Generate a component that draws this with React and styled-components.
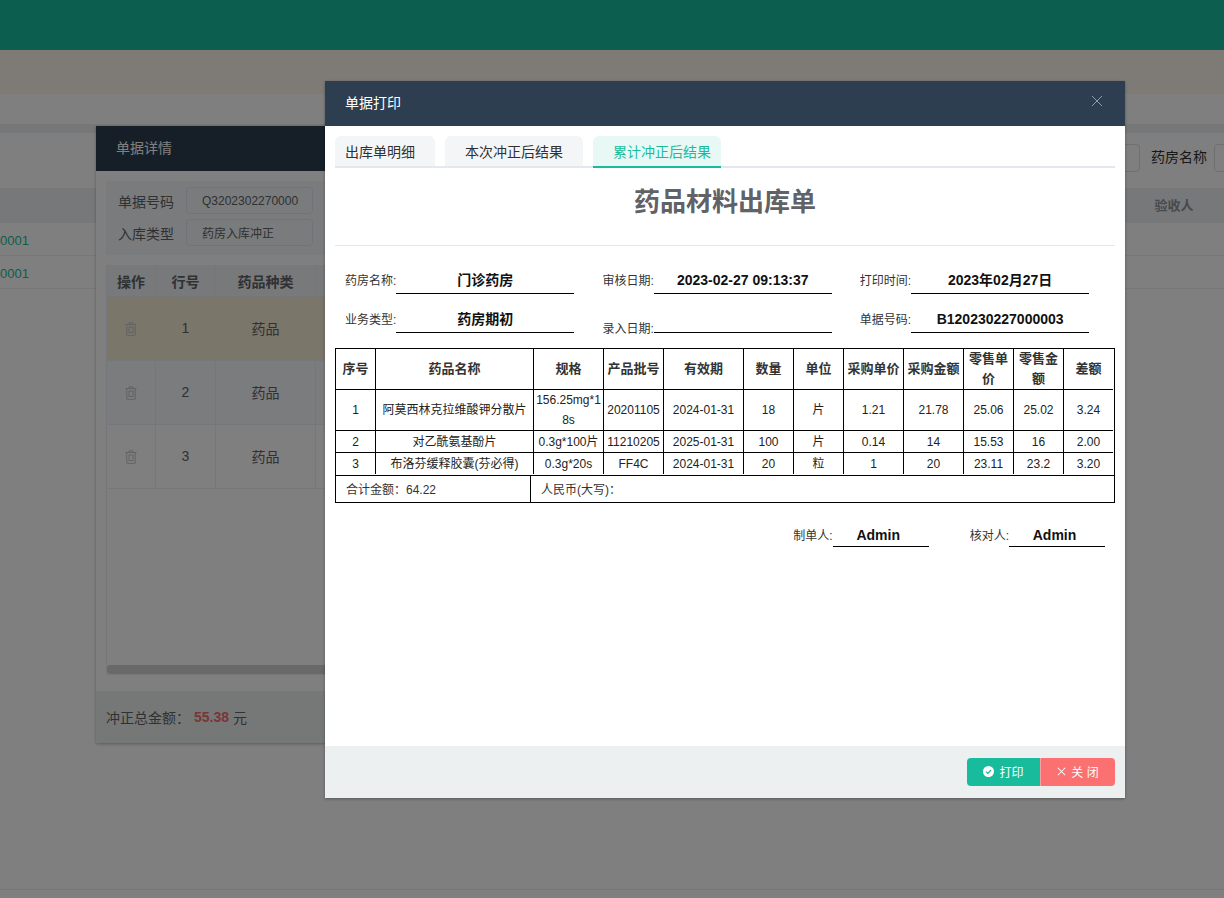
import styled, { createGlobalStyle } from "styled-components";

const FONT = `"Liberation Sans", "Noto Sans CJK SC", sans-serif`;

const GlobalStyle = createGlobalStyle`
    * {
        box-sizing: border-box;
    }
    html, body {
        margin: 0;
        padding: 0;
        height: 100%;
        overflow: hidden;
        background: #fff;
        font-family: ${FONT};
    }
`;

/* page behind the dialogs */
const Page = styled.div`
    width: 1224px;
    height: 898px;
    overflow: hidden;
    display: flex;
    flex-direction: column;
    background: #fff;
`;

const TopBar = styled.div`
    height: 50px;
    flex: none;
    background: #18bc9c;
`;

const NoticeBand = styled.div`
    height: 44px;
    flex: none;
    background: linear-gradient(#fdf5ec, #fdf6ea);
`;

const TabStrip = styled.div`
    height: 30px;
    flex: none;
    background: #fff;
`;

const GapStrip = styled.div`
    height: 9px;
    flex: none;
    background: #eceef0;
`;

const FilterRow = styled.div`
    height: 55px;
    flex: none;
    display: flex;
    align-items: center;
    justify-content: flex-end;
    margin-right: -90px;
    padding-bottom: 6px;
    font-size: 14px;
    color: #303133;
`;

const FilterLabel = styled.span`
    margin: 0 7px 0 11px;
    padding-bottom: 3px;
`;

const FilterInput = styled.div`
    width: 100px;
    height: 28px;
    border: 1px solid #dcdfe6;
    border-radius: 4px;
    background: #fff;
`;

const ListRow = styled.div`
    height: ${(p) => (p.$head ? 35 : 33)}px;
    flex: none;
    display: flex;
    align-items: center;
    justify-content: space-between;
    padding-top: ${(p) => (p.$head ? 0 : 3)}px;
    font-size: 14px;
    font-weight: ${(p) => (p.$head ? 700 : 400)};
    color: ${(p) => (p.$head ? "#909399" : "#18bc9c")};
    background: ${(p) => (p.$head ? "#eef0f2" : "#fff")};
    border-bottom: ${(p) => (p.$head ? "none" : "1px solid #ebeef5")};
`;

const ListCode = styled.span`
    width: 29px;
    text-align: right;
    font-size: 13px;
`;

const ListHeadCell = styled.span`
    width: 100px;
    padding-bottom: 2px;
    text-align: center;
    font-size: 13px;
`;

const PageFoot = styled.div`
    margin-top: auto;
    height: 9px;
    flex: none;
    border-top: 1px solid #ebeef5;
`;

/* details dialog, under the mask */
const DetailDialog = styled.div`
    position: absolute;
    left: 96px;
    top: 126px;
    width: 1000px;
    height: 617px;
    display: flex;
    flex-direction: column;
    background: #fff;
    box-shadow: 0 1px 3px rgba(0, 0, 0, 0.3);
`;

const DetailHeader = styled.div`
    height: 45px;
    flex: none;
    display: flex;
    align-items: center;
    padding: 0 0 4px 20px;
    background: #2c3e50;
    color: #fff;
    font-size: 14px;
`;

const DetailBody = styled.div`
    flex: 1;
    display: flex;
    flex-direction: column;
    gap: 10px;
    padding: 10px 10px 16px;
    min-height: 0;
`;

const DetailForm = styled.div`
    height: 74px;
    flex: none;
    display: grid;
    grid-template-columns: 68px 127px;
    grid-auto-rows: 27px;
    row-gap: 5px;
    padding: 6px 0 0 12px;
    align-items: center;
    background: #f5f7fa;
    font-size: 14px;
    color: #606266;
`;

const DetailInput = styled.div`
    height: 27px;
    display: flex;
    align-items: center;
    padding-left: 15px;
    font-size: 12px;
    color: #606266;
    border: 1px solid #e4e7ed;
    border-radius: 4px;
    background: #f5f7fa;
    overflow: hidden;
    white-space: nowrap;
`;

const DetailTable = styled.div`
    flex: 1;
    display: flex;
    flex-direction: column;
    min-height: 0;
    border: 1px solid #ebeef5;
    border-top: none;
`;

const DetailRow = styled.div`
    flex: none;
    display: grid;
    grid-template-columns: 49px 60px 100px 1fr;
    height: ${(p) => (p.$head ? 32 : 64)}px;
    background: ${(p) => p.$bg};
    font-size: 14px;
    font-weight: ${(p) => (p.$head ? 700 : 400)};
    color: #606266;
`;

const DetailCell = styled.div`
    display: flex;
    align-items: center;
    justify-content: center;
    padding-bottom: ${(p) => (p.$lift ? 2 : 0)}px;
    border-right: 1px solid #ebeef5;
    border-bottom: 1px solid #ebeef5;
`;

const ScrollThumb = styled.div`
    margin-top: auto;
    height: 9px;
    flex: none;
    background: #d3d3d3;
    border-radius: 3px;
`;

const DetailFooter = styled.div`
    height: 52px;
    flex: none;
    display: flex;
    align-items: center;
    padding-left: 10px;
    background: #ecf0f1;
    font-size: 14px;
    color: #606266;
`;

const Amount = styled.b`
    margin: 0 4px;
    color: #f56c6c;
`;

const Mask = styled.div`
    position: absolute;
    inset: 0;
    background: rgba(0, 0, 0, 0.5);
`;

/* print dialog */
const PrintDialog = styled.div`
    position: absolute;
    left: 325px;
    top: 81px;
    width: 800px;
    height: 717px;
    display: flex;
    flex-direction: column;
    background: #fff;
    box-shadow: 0 1px 3px rgba(0, 0, 0, 0.3);
`;

const PrintHeader = styled.div`
    height: 45px;
    flex: none;
    display: flex;
    align-items: center;
    justify-content: space-between;
    padding: 0 22px 4px 20px;
    background: #2c3e50;
    color: #fff;
    font-size: 14px;
    svg {
        margin-top: -2px;
    }
`;

const PrintBody = styled.div`
    flex: 1;
    min-height: 0;
    padding: 10px 10px 0;
    color: #333;
`;

const Tabs = styled.div`
    display: flex;
    gap: 10px;
    height: 32px;
    border-bottom: 2px solid #e4e7ed;
`;

const Tab = styled.div`
    height: 32px;
    padding: 0 20px;
    display: flex;
    align-items: center;
    font-size: 14px;
    border-radius: 6px 6px 0 0;
    color: ${(p) => (p.$active ? "#18bc9c" : "#303133")};
    background: ${(p) => (p.$active ? "#e8f8f5" : "#f4f5f6")};
    border-bottom: 2px solid ${(p) => (p.$active ? "#18bc9c" : "#e4e7ed")};
    &:first-child {
        padding-left: 10px;
    }
    &:last-child {
        padding-right: 10px;
    }
`;

const SheetTitle = styled.h1`
    margin: 0;
    height: 78px;
    padding-bottom: 14px;
    display: flex;
    align-items: center;
    justify-content: center;
    font-size: 26px;
    font-weight: 700;
    color: #606266;
    border-bottom: 1px solid #e4e7ed;
`;

const InfoGrid = styled.div`
    display: grid;
    grid-template-columns: repeat(3, 33%);
    row-gap: 15px;
    align-items: start;
    margin-top: 24px;
`;

const InfoItem = styled.div`
    display: flex;
    align-items: baseline;
    padding-left: 10px;
`;

const FieldLabel = styled.span`
    font-size: 12px;
    white-space: nowrap;
`;

const FieldValue = styled.div`
    width: ${(p) => p.$width}px;
    height: 24px;
    line-height: 21px;
    text-align: center;
    font-size: 14px;
    font-weight: 700;
    color: #111;
    border-bottom: 1px solid #000;
`;

const SignValue = styled(FieldValue)`
    padding-right: 5px;
    line-height: 25px;
`;

const SheetFrame = styled.div`
    margin-top: 12px;
    border: 1px solid #000;
`;

const SheetTable = styled.table`
    width: 777px;
    table-layout: fixed;
    border-collapse: separate;
    border-spacing: 0;
`;

const HeadCell = styled.th`
    height: 41px;
    padding: 0;
    font-size: 13px;
    line-height: 20px;
    font-weight: 700;
    color: #333;
    text-align: center;
    vertical-align: middle;
    border-right: 1px solid #000;
    border-bottom: 1px solid #000;
    &:last-child {
        border-right: none;
    }
`;

const BodyCell = styled.td`
    height: ${(p) => p.$height}px;
    padding: 0;
    font-size: 12px;
    line-height: 20px;
    color: #222;
    text-align: center;
    vertical-align: middle;
    word-break: break-all;
    border-right: 1px solid #000;
    border-bottom: ${(p) => (p.$last ? "none" : "1px solid #000")};
    &:last-child {
        border-right: none;
    }
`;

const SummaryRow = styled.div`
    height: 27px;
    margin-top: 1px;
    display: flex;
    align-items: center;
    border-top: 1px solid #000;
    font-size: 12px;
`;

const SummaryCell = styled.div`
    height: 100%;
    display: flex;
    align-items: center;
    padding: 0 0 1px 10px;
    width: ${(p) => p.$width};
    border-right: ${(p) => (p.$line ? "1px solid #000" : "none")};
`;

const SignRow = styled.div`
    display: flex;
    justify-content: flex-end;
    gap: 41px;
    margin-top: 20px;
    padding-right: 10px;
`;

const SignItem = styled.div`
    display: flex;
    align-items: baseline;
`;

const PrintFooter = styled.div`
    height: 52px;
    flex: none;
    display: flex;
    justify-content: flex-end;
    align-items: center;
    padding-right: 10px;
    background: #ecf0f1;
`;

const FootButton = styled.button`
    height: 28px;
    width: ${(p) => p.$width}px;
    padding: 0 0 1px;
    display: flex;
    align-items: center;
    justify-content: center;
    gap: 5px;
    border: none;
    border-left: ${(p) => (p.$divider ? "1px solid #f9a0a0" : "none")};
    color: #fff;
    font-family: ${FONT};
    font-size: 12px;
    background: ${(p) => p.$bg};
    border-radius: ${(p) => p.$radius};
`;

const columns = [40, 158, 70, 60, 80, 50, 50, 60, 60, 50, 50, 49];
const heads = ["序号", "药品名称", "规格", "产品批号", "有效期", "数量", "单位", "采购单价", "采购金额", "零售单价", "零售金额", "差额"];
const rows = [
    ["1", "阿莫西林克拉维酸钾分散片", "156.25mg*18s", "20201105", "2024-01-31", "18", "片", "1.21", "21.78", "25.06", "25.02", "3.24"],
    ["2", "对乙酰氨基酚片", "0.3g*100片", "11210205", "2025-01-31", "100", "片", "0.14", "14", "15.53", "16", "2.00"],
    ["3", "布洛芬缓释胶囊(芬必得)", "0.3g*20s", "FF4C", "2024-01-31", "20", "粒", "1", "20", "23.11", "23.2", "3.20"],
];
const rowHeights = [41, 22, 21];
const info = [
    ["药房名称:", "门诊药房"],
    ["审核日期:", "2023-02-27 09:13:37"],
    ["打印时间:", "2023年02月27日"],
    ["业务类型:", "药房期初"],
    ["录入日期:", ""],
    ["单据号码:", "B120230227000003"],
];
const detailRows = [
    { no: 1, bg: "#f5ecd3" },
    { no: 2, bg: "#f7f8fa" },
    { no: 3, bg: "#fff" },
];

function TrashIcon() {
    return (
        <svg width="12" height="14" viewBox="0 0 12 14" fill="none" stroke="#c4c6ca" strokeWidth="1">
            <path d="M0.5 2.5h11M4 2.5V0.8h4v1.7M1.8 2.5v10.8h8.4V2.5" />
            <rect x="4" y="5" width="4" height="5.5" />
        </svg>
    );
}

function CheckIcon() {
    return (
        <svg width="11" height="11" viewBox="0 0 11 11">
            <circle cx="5.5" cy="5.5" r="5.5" fill="#fff" />
            <path d="M3 5.6l1.8 1.7L8 4" fill="none" stroke="#18bc9c" strokeWidth="1.2" />
        </svg>
    );
}

function CloseIcon({ size, color, weight = 1 }) {
    return (
        <svg width={size} height={size} viewBox="0 0 12 12" fill="none" stroke={color} strokeWidth={weight}>
            <path d="M1 1l10 10M11 1L1 11" />
        </svg>
    );
}

export default function App() {
    return (
        <>
            <GlobalStyle />
            <Page>
                <TopBar />
                <NoticeBand />
                <TabStrip />
                <GapStrip />
                <FilterRow>
                    <FilterInput />
                    <FilterLabel>药房名称</FilterLabel>
                    <FilterInput />
                </FilterRow>
                <ListRow $head>
                    <span />
                    <ListHeadCell>验收人</ListHeadCell>
                </ListRow>
                <ListRow>
                    <ListCode>0001</ListCode>
                </ListRow>
                <ListRow>
                    <ListCode>0001</ListCode>
                </ListRow>
                <PageFoot />
            </Page>

            <DetailDialog>
                <DetailHeader>单据详情</DetailHeader>
                <DetailBody>
                    <DetailForm>
                        <span>单据号码</span>
                        <DetailInput>Q3202302270000</DetailInput>
                        <span>入库类型</span>
                        <DetailInput>药房入库冲正</DetailInput>
                    </DetailForm>
                    <DetailTable>
                        <DetailRow $head $bg="#f0f2f5">
                            <DetailCell>操作</DetailCell>
                            <DetailCell>行号</DetailCell>
                            <DetailCell>药品种类</DetailCell>
                            <DetailCell />
                        </DetailRow>
                        {detailRows.map((row) => (
                            <DetailRow key={row.no} $bg={row.bg}>
                                <DetailCell>
                                    <TrashIcon />
                                </DetailCell>
                                <DetailCell $lift>{row.no}</DetailCell>
                                <DetailCell $lift>药品</DetailCell>
                                <DetailCell />
                            </DetailRow>
                        ))}
                        <ScrollThumb />
                    </DetailTable>
                </DetailBody>
                <DetailFooter>
                    冲正总金额：<Amount>55.38</Amount>元
                </DetailFooter>
            </DetailDialog>

            <Mask />

            <PrintDialog>
                <PrintHeader>
                    单据打印
                    <CloseIcon size={12} color="#909ca8" />
                </PrintHeader>
                <PrintBody>
                    <Tabs>
                        <Tab>出库单明细</Tab>
                        <Tab>本次冲正后结果</Tab>
                        <Tab $active>累计冲正后结果</Tab>
                    </Tabs>
                    <SheetTitle>药品材料出库单</SheetTitle>
                    <InfoGrid>
                        {info.map(([label, value]) => (
                            <InfoItem key={label}>
                                <FieldLabel>{label}</FieldLabel>
                                <FieldValue $width={178}>{value}</FieldValue>
                            </InfoItem>
                        ))}
                    </InfoGrid>
                    <SheetFrame>
                        <SheetTable>
                            <colgroup>
                                {columns.map((width, i) => (
                                    <col key={i} width={width} />
                                ))}
                            </colgroup>
                            <thead>
                                <tr>
                                    {heads.map((head) => (
                                        <HeadCell key={head}>{head}</HeadCell>
                                    ))}
                                </tr>
                            </thead>
                            <tbody>
                                {rows.map((row, r) => (
                                    <tr key={r}>
                                        {row.map((cell, c) => (
                                            <BodyCell key={c} $height={rowHeights[r]} $last={r === rows.length - 1}>
                                                {cell}
                                            </BodyCell>
                                        ))}
                                    </tr>
                                ))}
                            </tbody>
                        </SheetTable>
                        <SummaryRow>
                            <SummaryCell $width="195px" $line>合计金额：64.22</SummaryCell>
                            <SummaryCell $width="auto">人民币(大写)：</SummaryCell>
                        </SummaryRow>
                    </SheetFrame>
                    <SignRow>
                        <SignItem>
                            <FieldLabel>制单人:</FieldLabel>
                            <SignValue $width={96}>Admin</SignValue>
                        </SignItem>
                        <SignItem>
                            <FieldLabel>核对人:</FieldLabel>
                            <SignValue $width={96}>Admin</SignValue>
                        </SignItem>
                    </SignRow>
                </PrintBody>
                <PrintFooter>
                    <FootButton $width={73} $bg="#18bc9c" $radius="4px 0 0 4px">
                        <CheckIcon />
                        打印
                    </FootButton>
                    <FootButton $width={75} $bg="#fb7070" $radius="0 4px 4px 0" $divider>
                        <CloseIcon size={9} color="#fff" weight={1.4} />
                        关 闭
                    </FootButton>
                </PrintFooter>
            </PrintDialog>
        </>
    );
}
